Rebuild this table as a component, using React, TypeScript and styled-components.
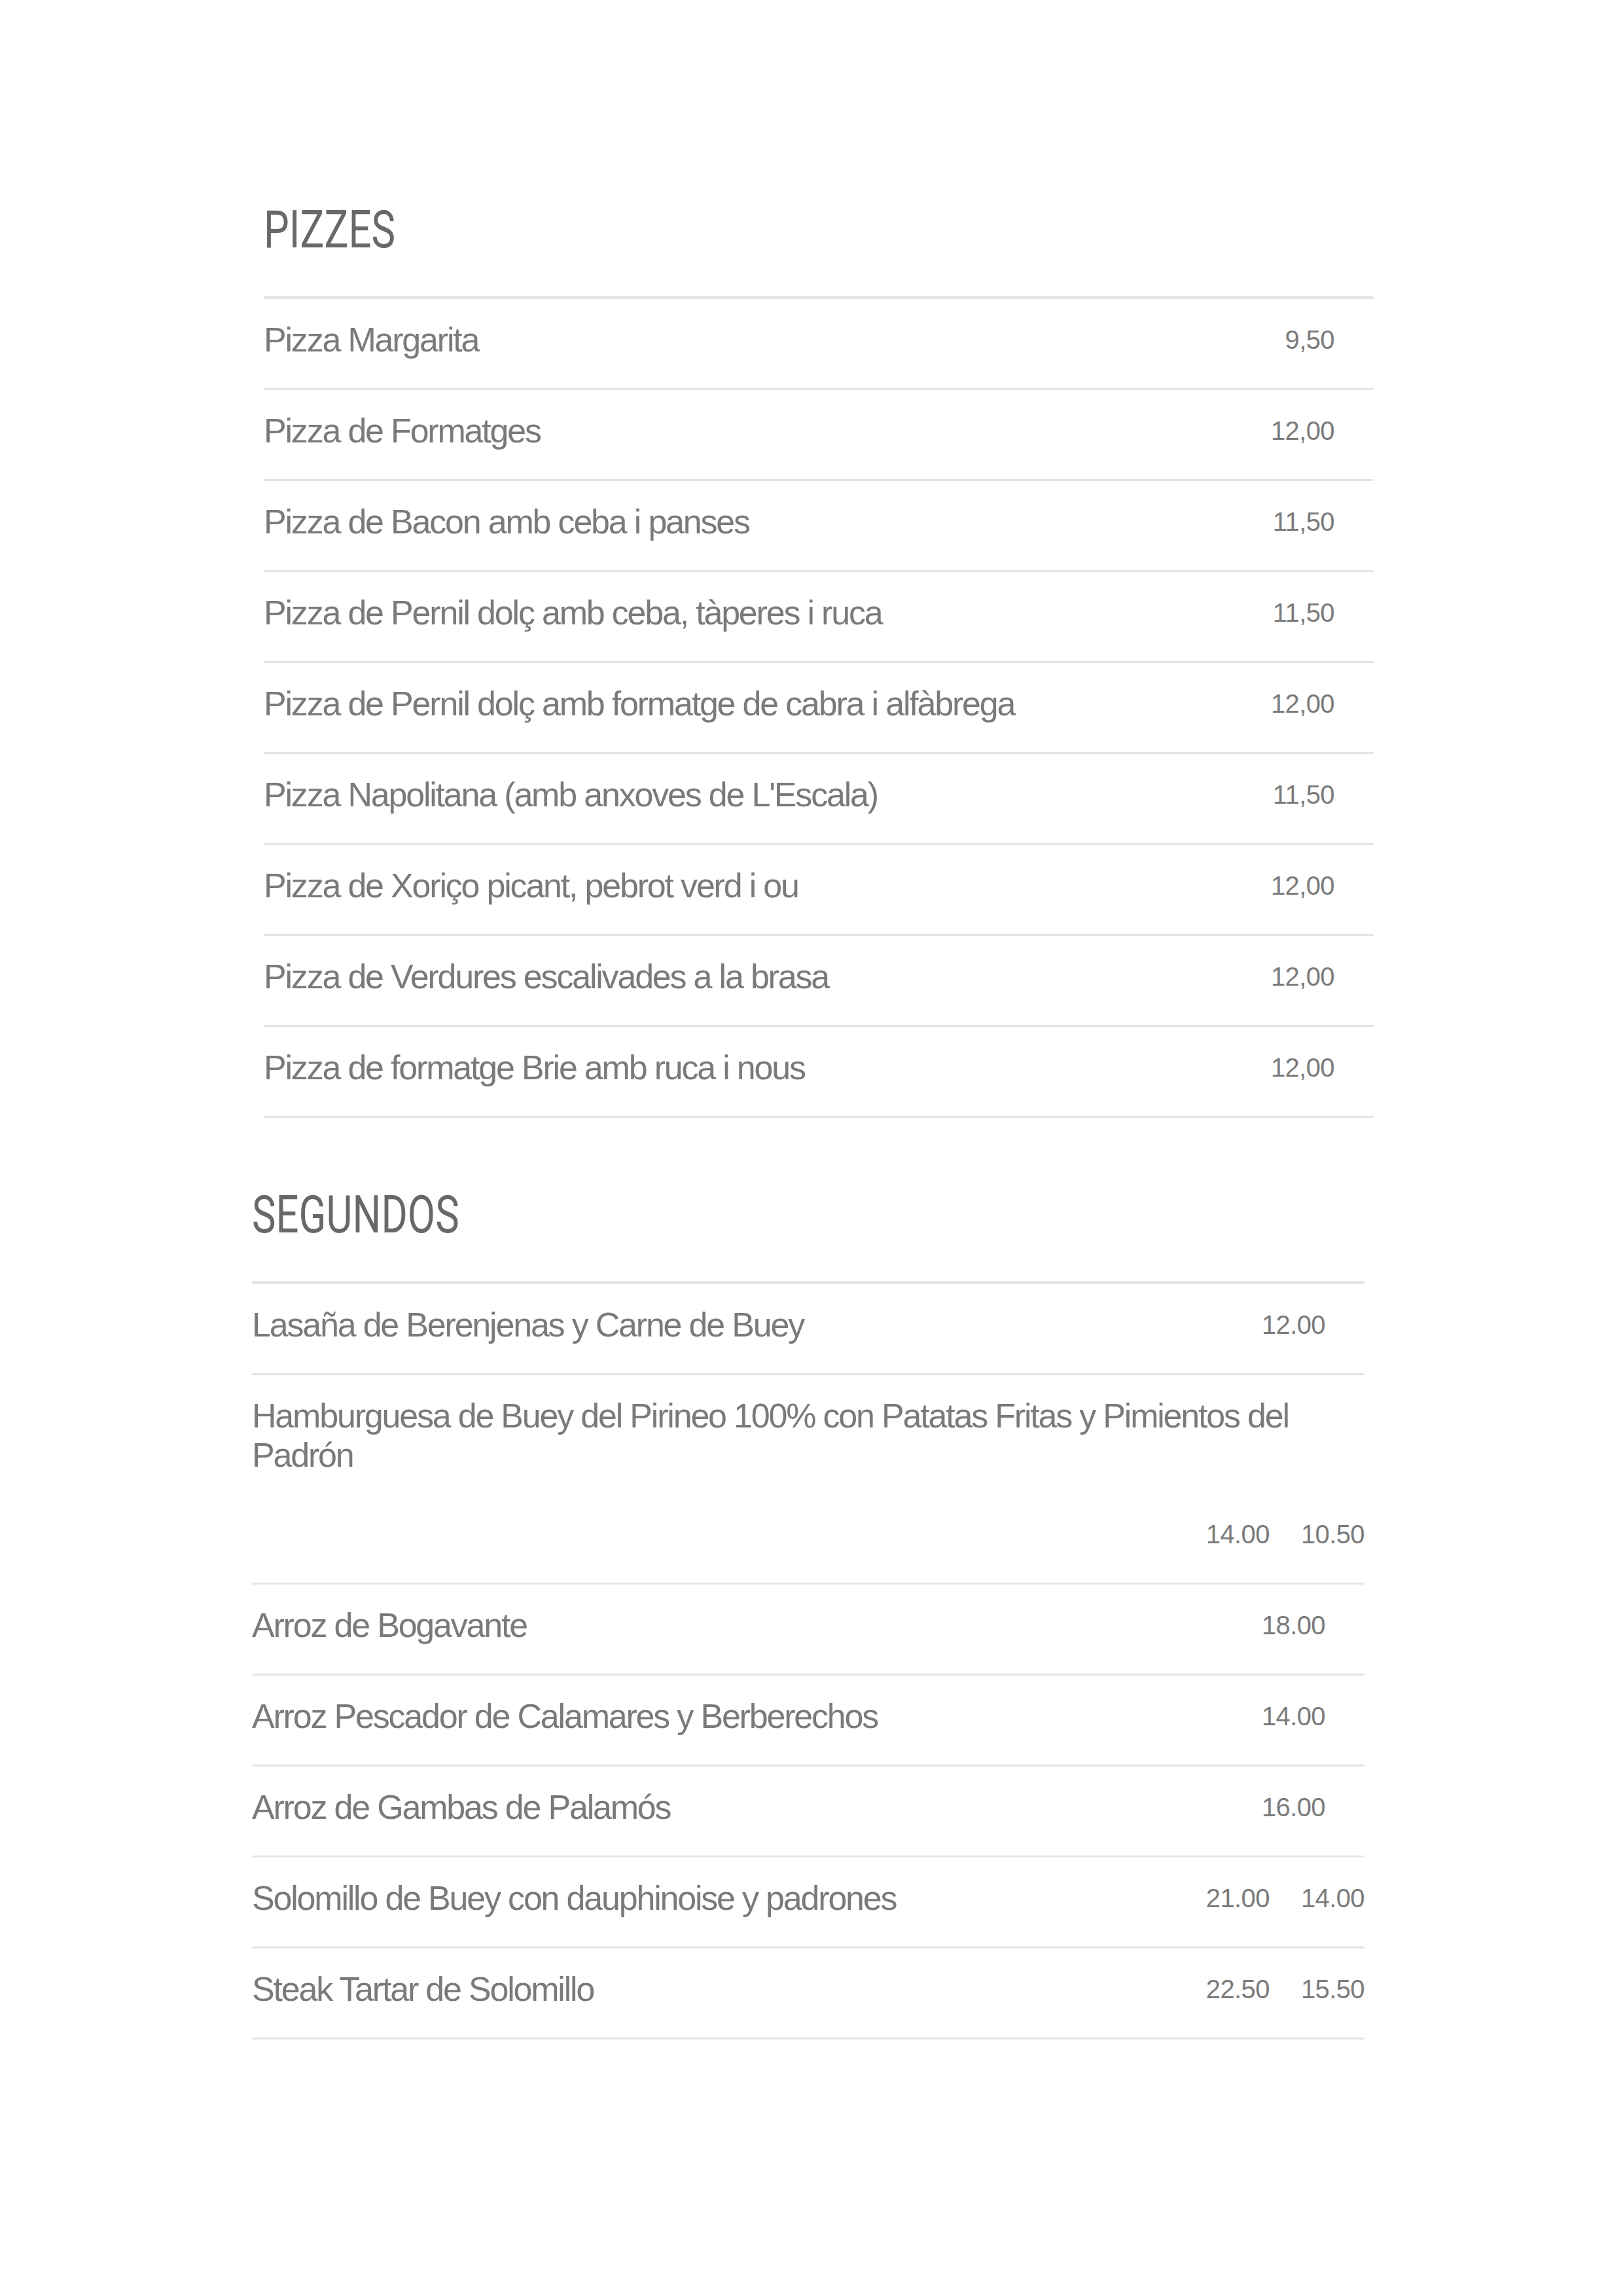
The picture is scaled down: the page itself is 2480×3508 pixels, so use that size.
import React from "react";
import styled, { createGlobalStyle } from "styled-components";

const GlobalStyle = createGlobalStyle`
  html, body {
    margin: 0;
    padding: 0;
    background: #ffffff;
  }
  body {
    font-family: "Liberation Sans", Arial, sans-serif;
    overflow-x: hidden;
  }
`;

const Page = styled.main`
  box-sizing: border-box;
  min-height: 3508px;
  padding-top: 303px;
  display: flex;
  flex-direction: column;
`;

const Section = styled.section<{ $left: number; $width: number }>`
  width: ${(p) => p.$width}px;
  margin-left: ${(p) => p.$left}px;
  & + & {
    margin-top: 100px;
  }
`;

const Heading = styled.h2`
  margin: 0 0 53px;
  font-family: Roboto, "Liberation Sans", sans-serif;
  font-weight: 400;
  font-size: 80px;
  line-height: 96px;
  color: #686868;
  transform: scaleX(0.77);
  transform-origin: left center;
`;

const List = styled.ul`
  list-style: none;
  margin: 0;
  padding: 0;
  border-top: 5px solid #e5e5e5;
`;

const Item = styled.li`
  display: flex;
  flex-wrap: wrap;
  align-items: flex-start;
  row-gap: 61px;
  padding: 32px 0 44px;
  border-bottom: 3px solid #e5e5e5;
`;

const Name = styled.span`
  flex: 1 1 auto;
  min-width: 0;
  font-size: 52px;
  line-height: 60px;
  letter-spacing: -2.2px;
  color: #7a7a7a;
`;

const Prices = styled.div<{ $single: boolean }>`
  display: flex;
  gap: 48px;
  margin-left: auto;
  padding-right: ${(p) => (p.$single ? 60 : 0)}px;
`;

const Price = styled.span`
  font-size: 40px;
  line-height: 60px;
  letter-spacing: -0.6px;
  color: #7b7b7b;
`;

type Dish = { name: string; prices: string[] };

const pizzes: Dish[] = [
  { name: "Pizza Margarita", prices: ["9,50"] },
  { name: "Pizza de Formatges", prices: ["12,00"] },
  { name: "Pizza de Bacon amb ceba i panses", prices: ["11,50"] },
  { name: "Pizza de Pernil dolç amb ceba, tàperes i ruca", prices: ["11,50"] },
  { name: "Pizza de Pernil dolç amb formatge de cabra i alfàbrega", prices: ["12,00"] },
  { name: "Pizza Napolitana (amb anxoves de L'Escala)", prices: ["11,50"] },
  { name: "Pizza de Xoriço picant, pebrot verd i ou", prices: ["12,00"] },
  { name: "Pizza de Verdures escalivades a la brasa", prices: ["12,00"] },
  { name: "Pizza de formatge Brie amb ruca i nous", prices: ["12,00"] },
];

const segundos: Dish[] = [
  { name: "Lasaña de Berenjenas y Carne de Buey", prices: ["12.00"] },
  {
    name: "Hamburguesa de Buey del Pirineo 100% con Patatas Fritas y Pimientos del Padrón",
    prices: ["14.00", "10.50"],
  },
  { name: "Arroz de Bogavante", prices: ["18.00"] },
  { name: "Arroz Pescador de Calamares y Berberechos", prices: ["14.00"] },
  { name: "Arroz de Gambas de Palamós", prices: ["16.00"] },
  { name: "Solomillo de Buey con dauphinoise y padrones", prices: ["21.00", "14.00"] },
  { name: "Steak Tartar de Solomillo", prices: ["22.50", "15.50"] },
];

const MenuSection: React.FC<{
  title: string;
  left: number;
  width: number;
  dishes: Dish[];
}> = ({ title, left, width, dishes }) => (
  <Section $left={left} $width={width}>
    <Heading>{title}</Heading>
    <List>
      {dishes.map((d) => (
        <Item key={d.name}>
          <Name>{d.name}</Name>
          <Prices $single={d.prices.length === 1}>
            {d.prices.map((p, i) => (
              <Price key={i}>{p}</Price>
            ))}
          </Prices>
        </Item>
      ))}
    </List>
  </Section>
);

export default function App() {
  return (
    <>
      <GlobalStyle />
      <Page>
        <MenuSection title="PIZZES" left={403} width={1696} dishes={pizzes} />
        <MenuSection title="SEGUNDOS" left={385} width={1700} dishes={segundos} />
      </Page>
    </>
  );
}
